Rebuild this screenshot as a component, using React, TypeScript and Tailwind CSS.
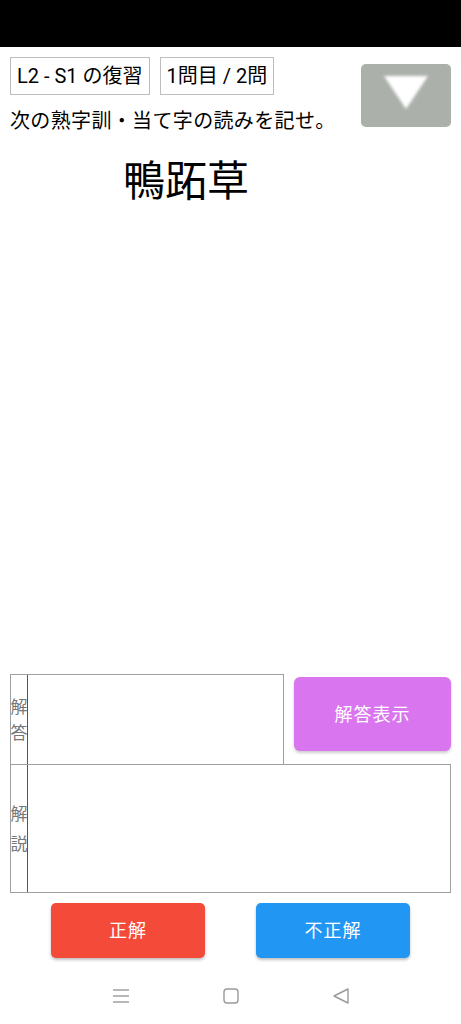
import { useState } from 'react';

const font = { fontFamily: "Roboto, 'Noto Sans CJK JP', sans-serif" };

export default function App() {
  const [answer, setAnswer] = useState('');

  return (
    <div className="w-[461px] h-[1024px] bg-white flex flex-col text-black" style={font}>
      {/* status bar */}
      <div className="h-[47px] bg-black shrink-0" />

      <div className="flex justify-between pl-[10px] pr-[10px] pt-[10px]">
        <div className="flex flex-col">
          <div className="flex gap-[10px]">
            <div className="h-[38px] px-[6px] border border-[#bdbdbd] flex items-center text-[20px] leading-none">
              L2 - S1 の復習
            </div>
            <div className="h-[38px] px-[6px] border border-[#bdbdbd] flex items-center text-[20px] leading-none">
              1問目 / 2問
            </div>
          </div>
          <p className="mt-[13px] text-[20px] leading-[26px] tracking-[0.35px]">次の熟字訓・当て字の読みを記せ。</p>
        </div>
        <button className="mt-[7px] w-[90px] h-[63px] rounded-[5px] bg-[#abb0ab] flex items-start justify-center pt-[9px]">
          <svg width="50" height="40" viewBox="0 0 50 40">
            <defs>
              <filter id="blur" x="-20%" y="-20%" width="140%" height="140%">
                <feGaussianBlur stdDeviation="1.8" />
              </filter>
            </defs>
            <polygon points="3,3 47,3 25,36" fill="#ffffff" filter="url(#blur)" />
          </svg>
        </button>
      </div>

      <div className="pl-[123px] mt-[23px] text-[42px] leading-[50px]">鴨跖草</div>

      <div className="flex-1" />

      <div className="px-[10px]">
        <div className="flex items-start">
          <div className="w-[274px] h-[91px] border border-[#a0a0a0] flex">
            <div className="w-[17px] border-r border-[#555] flex items-center justify-center text-[17px] leading-[26px] text-[#777] text-center">
              解<br />答
            </div>
            <input
              value={answer}
              onChange={(e) => setAnswer(e.target.value)}
              className="flex-1 outline-none px-2 text-[18px]"
            />
          </div>
          <button className="ml-[10px] mt-[3px] w-[157px] h-[74px] rounded-[6px] bg-[#da75f0] text-white text-[18px] tracking-[1px] shadow-[0_2px_3px_rgba(0,0,0,0.2)]">
            解答表示
          </button>
        </div>
        <div className="-mt-px h-[129px] border border-[#a0a0a0] flex">
          <div className="w-[17px] border-r border-[#555] flex items-center justify-center text-[17px] leading-[30px] text-[#777] text-center">
            解<br />説
          </div>
          <div className="flex-1" />
        </div>
      </div>

      <div className="flex justify-center gap-[51px] mt-[10px]">
        <button className="w-[154px] h-[55px] rounded-[5px] bg-[#f44a39] text-white text-[18px] tracking-[1px] shadow-[0_2px_3px_rgba(0,0,0,0.25)]">
          正解
        </button>
        <button className="w-[154px] h-[55px] rounded-[5px] bg-[#2196f3] text-white text-[18px] tracking-[1px] shadow-[0_2px_3px_rgba(0,0,0,0.25)]">
          不正解
        </button>
      </div>

      {/* navigation bar */}
      <div className="h-[66px] flex items-start justify-center gap-[94px] pt-[30px]">
        <svg width="16" height="16" viewBox="0 0 16 16" stroke="#9a9a9a" strokeWidth="1.4" fill="none">
          <line x1="0" y1="2" x2="16" y2="2" />
          <line x1="0" y1="8" x2="16" y2="8" />
          <line x1="0" y1="14" x2="16" y2="14" />
        </svg>
        <svg width="16" height="16" viewBox="0 0 16 16" stroke="#9a9a9a" strokeWidth="1.4" fill="none">
          <rect x="1" y="1" width="14" height="14" rx="3" />
        </svg>
        <svg width="16" height="16" viewBox="0 0 16 16" stroke="#9a9a9a" strokeWidth="1.4" fill="none">
          <polygon points="15,1 15,15 1,8" strokeLinejoin="round" />
        </svg>
      </div>
    </div>
  );
}
